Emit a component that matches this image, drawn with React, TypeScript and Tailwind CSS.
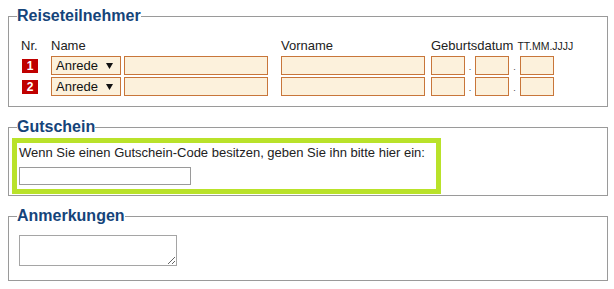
import React from "react";

const inputCls = "h-[19px] border border-[#c8763a] bg-[#fcf1dc]";

function Dot({ w }: { w: string }) {
  return <span className={`${w} self-end pb-[3px] text-center text-[9px] leading-[9px] text-[#444]`}>.</span>;
}

function Row({ nr }: { nr: number }) {
  return (
    <div className="flex items-center">
      <div className="w-[30px] pl-[1px]">
        <span className="flex h-[14px] w-[16px] items-center justify-center bg-[#c00000] text-[12px] font-bold leading-none text-white">
          {nr}
        </span>
      </div>
      <div className={`${inputCls} flex w-[70px] items-center justify-between pl-[4px] pr-[7px] text-[13px] text-[#111]`}>
        <span>Anrede</span>
        <svg width="7" height="6" viewBox="0 0 7 6">
          <path d="M0 0h7L3.5 6z" fill="#111" />
        </svg>
      </div>
      <div className={`${inputCls} ml-[3px] w-[144px]`} />
      <div className={`${inputCls} ml-[13px] w-[144px]`} />
      <div className={`${inputCls} ml-[6px] w-[34px]`} />
      <Dot w="w-[10px]" />
      <div className={`${inputCls} w-[34px]`} />
      <Dot w="w-[11px]" />
      <div className={`${inputCls} w-[34px]`} />
    </div>
  );
}

function Legend({ children }: { children: React.ReactNode }) {
  return (
    <legend className="ml-[8px] p-0 text-[16px] font-bold leading-[18px] text-[#15447a]">{children}</legend>
  );
}

export default function App() {
  return (
    <div className="min-h-screen bg-white pl-[8px] pt-[7px] font-['Liberation_Sans',Arial,sans-serif] text-[#222]">
      <div className="w-[600px]">
        {/* Reiseteilnehmer */}
        <fieldset className="border border-[#9a9a9a]">
          <Legend>Reiseteilnehmer</Legend>
          <div className="px-[12px] pb-[10px] pt-[13px]">
            <div className="flex items-baseline text-[13px] leading-[15px]">
              <span className="w-[30px]">Nr.</span>
              <span className="w-[230px]">Name</span>
              <span className="w-[150px]">Vorname</span>
              <span>Geburtsdatum</span>
              <span className="ml-[4px] text-[10.5px]">TT.MM.JJJJ</span>
            </div>
            <div className="mt-[2px] flex flex-col gap-[2px]">
              <Row nr={1} />
              <Row nr={2} />
            </div>
          </div>
        </fieldset>

        {/* Gutschein */}
        <fieldset className="mt-[11px] border border-[#9a9a9a]">
          <Legend>Gutschein</Legend>
          <div className="pb-[1px] pl-[3px] pt-[2px]">
            <div className="w-[429px] border-[5px] border-[#b9e22a] px-[2px] pb-[4px] pt-[2px]">
              <p className="text-[13px] leading-[15px]">
                Wenn Sie einen Gutschein-Code besitzen, geben Sie ihn bitte hier ein:
              </p>
              <input type="text" className="mt-[7px] block h-[18px] w-[172px] border border-[#9a9a9a] bg-white" />
            </div>
          </div>
        </fieldset>

        {/* Anmerkungen */}
        <fieldset className="mt-[11px] border border-[#9a9a9a]">
          <Legend>Anmerkungen</Legend>
          <div className="pb-[14px] pl-[10px] pt-[10px]">
            <textarea className="block h-[31px] w-[158px] resize border border-[#a5a5a5] bg-white" />
          </div>
        </fieldset>
      </div>
    </div>
  );
}
